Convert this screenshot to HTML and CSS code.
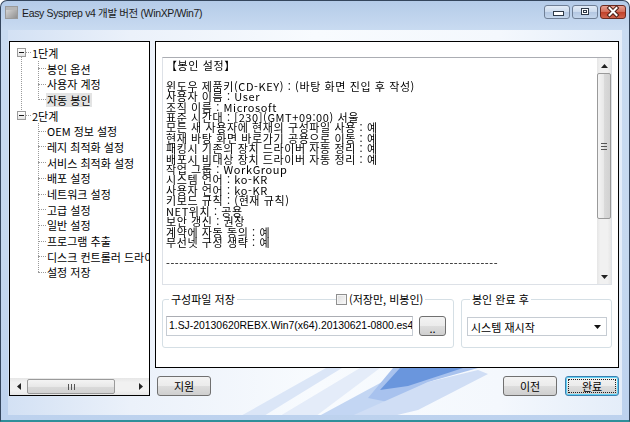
FILE: index.html
```html
<!DOCTYPE html>
<html lang="ko">
<head>
    <meta charset="UTF-8">
    <title>Easy Sysprep v4 개발 버전 (WinXP/Win7)</title>
    <link rel="stylesheet" href="styles.css">
</head>
<body>
    <div class="window">
        <div class="titlebar">
            <svg class="app-icon" viewBox="0 0 13 13">
                <defs>
                    <linearGradient id="ig" x1="0" y1="0" x2="1" y2="1">
                        <stop offset="0" stop-color="#e2e2e2"/>
                        <stop offset="1" stop-color="#8c8c8c"/>
                    </linearGradient>
                </defs>
                <rect x="0.5" y="0.5" width="12" height="12" fill="url(#ig)" stroke="#9a9a9a"/>
                <rect x="1" y="1" width="11" height="3" fill="#b5b5b5"/>
            </svg>
            <span class="title">Easy Sysprep v4 개발 버전 (WinXP/Win7)</span>
            <div class="caption-btns">
                <span class="cap"><i class="glyph-min"></i></span>
                <span class="cap"><i class="glyph-max"></i></span>
                <span class="cap cap-close">
                    <svg width="26" height="14" viewBox="0 0 26 14">
                        <path d="M9.5 3 L16.5 10 M16.5 3 L9.5 10" stroke="#4a1f16" stroke-width="4" stroke-linecap="square"/>
                        <path d="M9.5 3 L16.5 10 M16.5 3 L9.5 10" stroke="#fff" stroke-width="2" stroke-linecap="square"/>
                    </svg>
                </span>
            </div>
        </div>

        <div class="client">
            <svg class="streaks" width="614" height="385" viewBox="0 0 614 385">
                <polygon points="222,392 318,338 334,338 246,392" fill="#dbe6f7"/>
                <polygon points="262,392 352,338 372,338 300,392" fill="#e4ecf9"/>
                <polygon points="300,392 400,338 450,338 340,392" fill="#c3d6f3"/>
                <polygon points="360,368 385,338 470,338 420,352 380,372" fill="#a8c2ee"/>
                <polygon points="372,360 392,338 455,338 400,356" fill="#6a96dd"/>
                <polygon points="330,392 420,352 470,340 480,344 410,380 360,392" fill="#d0def5"/>
            </svg>

            <div class="tree">
                <div class="tree-body">
                    <ul>
                        <li class="root">
                            <div class="row"><span class="expander"></span><span class="tick root-tick"></span><span class="label">1단계</span></div>
                            <ul class="children">
                                <li><div class="row"><span class="tick"></span><span class="label">봉인 옵션</span></div></li>
                                <li><div class="row"><span class="tick"></span><span class="label">사용자 계정</span></div></li>
                                <li><div class="row"><span class="tick"></span><span class="label selected">자동 봉인</span></div></li>
                            </ul>
                        </li>
                        <li class="root last">
                            <div class="row"><span class="expander"></span><span class="tick root-tick"></span><span class="label">2단계</span></div>
                            <ul class="children">
                                <li><div class="row"><span class="tick"></span><span class="label">OEM 정보 설정</span></div></li>
                                <li><div class="row"><span class="tick"></span><span class="label">레지 최적화 설정</span></div></li>
                                <li><div class="row"><span class="tick"></span><span class="label">서비스 최적화 설정</span></div></li>
                                <li><div class="row"><span class="tick"></span><span class="label">배포 설정</span></div></li>
                                <li><div class="row"><span class="tick"></span><span class="label">네트워크 설정</span></div></li>
                                <li><div class="row"><span class="tick"></span><span class="label">고급 설정</span></div></li>
                                <li><div class="row"><span class="tick"></span><span class="label">일반 설정</span></div></li>
                                <li><div class="row"><span class="tick"></span><span class="label">프로그램 추출</span></div></li>
                                <li><div class="row"><span class="tick"></span><span class="label">디스크 컨트롤러 드라이버</span></div></li>
                                <li><div class="row"><span class="tick"></span><span class="label">설정 저장</span></div></li>
                            </ul>
                        </li>
                    </ul>
                </div>
                <div class="hscroll">
                    <span class="sb-arrow"><svg width="4" height="7" viewBox="0 0 4 7"><path d="M4 0 L0 3.5 L4 7 Z" fill="#222"/></svg></span>
                    <span class="hthumb"><i class="grip"></i></span>
                    <span class="track"></span>
                    <span class="sb-arrow"><svg width="4" height="7" viewBox="0 0 4 7"><path d="M0 0 L4 3.5 L0 7 Z" fill="#222"/></svg></span>
                </div>
            </div>

            <div class="main">
                <div class="panel">
                    <div class="memo">
<div class="memo-text">【봉인 설정】

윈도우 제품키(CD-KEY) : (바탕 화면 진입 후 작성)
사용자 이름 : User
조직 이름 : Microsoft
표준 시간대 : [230](GMT+09:00) 서울
모든 새 사용자에 현재의 구성파일 사용 : 예
현재 바탕 화면 바로가기 공용으로 이동 : 예
패킹시 기존의 장치 드라이버 자동 정리 : 예
배포시 비대상 장치 드라이버 자동 정리 : 예
작업 그룹 : WorkGroup
시스템 언어 : ko-KR
사용자 언어 : ko-KR
키보드 규칙 : (현재 규칙)
NET위치 : 공용
보안 갱신 : 권장
계약에 자동 동의 : 예
무선넷 구성 생략 : 예

---------------------------------------------------------------------------</div>
                        <div class="vscroll">
                            <span class="sb-arrow-v"><svg width="7" height="4" viewBox="0 0 7 4"><path d="M0 4 L3.5 0 L7 4 Z" fill="#222"/></svg></span>
                            <span class="vthumb"><i class="grip-v"></i></span>
                            <span class="track"></span>
                            <span class="sb-arrow-v"><svg width="7" height="4" viewBox="0 0 7 4"><path d="M0 0 L3.5 4 L7 0 Z" fill="#222"/></svg></span>
                        </div>
                    </div>

                    <div class="groups">
                        <fieldset class="group group-config">
                            <legend>구성파일 저장</legend>
                            <label class="save-only"><span class="check"></span>(저장만, 비봉인)</label>
                            <div class="field-row">
                                <div class="textbox">1.SJ-20130620REBX.Win7(x64).20130621-0800.es4</div>
                                <button class="btn btn-browse">..</button>
                            </div>
                        </fieldset>
                        <fieldset class="group group-after">
                            <legend>봉인 완료 후</legend>
                            <div class="combo">
                                <span>시스템 재시작</span>
                                <svg width="7" height="4" viewBox="0 0 7 4"><path d="M0 0 L3.5 4 L7 0 Z" fill="#111"/></svg>
                            </div>
                        </fieldset>
                    </div>
                </div>

                <div class="actions">
                    <button class="btn">지원</button>
                    <span class="spacer"></span>
                    <button class="btn">이전</button>
                    <button class="btn btn-default">완료</button>
                </div>
            </div>
        </div>
    </div>
</body>
</html>
```

FILE: styles.css
```css
body {
    margin: 0;
    background: #fff;
    font-family: "Noto Sans CJK KR", sans-serif;
    font-size: 11px;
    color: #000;
}

.window {
    position: relative;
    width: 630px;
    height: 422px;
    box-sizing: border-box;
    border: 1px solid #34455c;
    border-bottom: 2px solid #2f8f9a;
    border-radius: 7px 7px 0 0;
    overflow: hidden;
    background: linear-gradient(180deg, #b4cbe8 0%, #c9dbf1 7%, #c5d8ef 60%, #bdd2ee 100%);
}

/* title bar */
.titlebar {
    height: 29px;
    display: flex;
    align-items: flex-start;
    padding: 4px 3px 0 4px;
    box-sizing: border-box;
}

.app-icon {
    width: 13px;
    height: 13px;
    margin-top: 1px;
}

.title {
    margin-left: 4px;
    font-family: "Liberation Sans", "Noto Sans CJK KR", sans-serif;
    font-size: 10.5px;
    letter-spacing: -0.35px;
    line-height: 16px;
    color: #1b1b1b;
}

.caption-btns {
    margin-left: auto;
    display: flex;
    gap: 2px;
}

.cap {
    position: relative;
    width: 26px;
    height: 14px;
    box-sizing: border-box;
    border: 1px solid #6f7f96;
    border-radius: 3px;
    background: linear-gradient(#e3ecf7, #cbdaed 50%, #b3c7e2 51%, #c4d6ec);
}

.cap-close {
    border-color: #6b2a20;
    background: linear-gradient(#e8a193, #d26c58 50%, #c0412a 51%, #d0634c);
}

.cap-close svg {
    position: absolute;
    left: -1px;
    top: -1px;
}

.glyph-min {
    position: absolute;
    left: 8px;
    top: 5px;
    width: 9px;
    height: 3px;
    border: 1px solid #2f3a48;
    background: #fff;
}

.glyph-max {
    position: absolute;
    left: 8px;
    top: 2px;
    width: 6px;
    height: 5px;
    border: 1px solid #2f3a48;
    background: #fff;
    box-shadow: inset 0 0 0 1px #fff, inset 0 0 0 2px #2f3a48;
}

/* client area */
.client {
    position: relative;
    display: flex;
    gap: 5px;
    height: 385px;
    margin: 0 7px;
    padding: 11px 3px 19px 1px;
    box-sizing: border-box;
    background: linear-gradient(90deg, #d3e1f4 0%, #ebf1fa 20%, #f8fbfe 50%, #f4f8fd 80%, #e4edf9 100%);
}

.streaks {
    position: absolute;
    left: 0;
    top: 0;
    z-index: 0;
}

/* tree view */
.tree {
    position: relative;
    z-index: 1;
    width: 141px;
    box-sizing: border-box;
    border: 1px solid #000;
    background: #fff;
    display: flex;
    flex-direction: column;
}

.tree-body {
    flex: 1;
    overflow: hidden;
    padding-top: 3px;
}

.tree ul {
    list-style: none;
    margin: 0;
    padding: 0;
}

.tree li {
    position: relative;
}

.row {
    display: flex;
    align-items: center;
    height: 15.7px;
    white-space: nowrap;
}

.row > span {
    flex-shrink: 0;
}

.root > .row {
    padding-left: 7px;
}

.root:not(.last)::before {
    content: "";
    position: absolute;
    left: 11px;
    top: 8px;
    bottom: -8px;
    border-left: 1px dotted #9a9a9a;
}

.expander {
    position: relative;
    z-index: 1;
    width: 9px;
    height: 9px;
    box-sizing: border-box;
    border: 1px solid #9b9b9b;
    background: linear-gradient(#fff, #e4e4e4);
    display: flex;
    align-items: center;
    justify-content: center;
}

.expander::before {
    content: "";
    width: 5px;
    height: 1px;
    background: #1a1a1a;
}

.tick {
    width: 8px;
    border-top: 1px dotted #9a9a9a;
}

.root-tick {
    width: 5px;
}

.label {
    padding: 0 1px;
    line-height: 14px;
}

.selected {
    background: #e3e3e3;
}

.children {
    position: relative;
}

.children > li > .row {
    padding-left: 28px;
}

.children::before {
    content: "";
    position: absolute;
    left: 28px;
    top: 0;
    bottom: 8px;
    border-left: 1px dotted #9a9a9a;
}

/* scrollbars */
.hscroll {
    display: flex;
    align-items: center;
    height: 17px;
    background: linear-gradient(#e6e6e6, #f1f1f1 25%, #f1f1f1 75%, #e6e6e6);
}

.sb-arrow {
    width: 17px;
    height: 17px;
    display: flex;
    align-items: center;
    justify-content: center;
}

.hthumb {
    width: 88px;
    height: 15px;
    box-sizing: border-box;
    border: 1px solid #9a9a9a;
    border-radius: 2px;
    background: linear-gradient(#f4f4f4, #e8e8e8 50%, #dadada 51%, #d2d2d2);
    display: flex;
    align-items: center;
    justify-content: center;
}

.grip {
    width: 7px;
    height: 6px;
    background: repeating-linear-gradient(90deg, #555 0 1px, transparent 1px 3px);
}

.track {
    flex: 1;
}

.vscroll {
    width: 14px;
    display: flex;
    flex-direction: column;
    background: linear-gradient(90deg, #e6e6e6, #f1f1f1 25%, #f1f1f1 75%, #e6e6e6);
}

.sb-arrow-v {
    height: 15px;
    display: flex;
    align-items: center;
    justify-content: center;
}

.vthumb {
    height: 146px;
    box-sizing: border-box;
    border: 1px solid #9a9a9a;
    border-radius: 2px;
    background: linear-gradient(90deg, #f4f4f4, #e8e8e8 50%, #dadada 51%, #d2d2d2);
    display: flex;
    align-items: center;
    justify-content: center;
}

.grip-v {
    width: 6px;
    height: 7px;
    background: repeating-linear-gradient(180deg, #555 0 1px, transparent 1px 3px);
}

/* right side */
.main {
    position: relative;
    z-index: 1;
    flex: 1;
    display: flex;
    flex-direction: column;
}

.panel {
    height: 327px;
    box-sizing: border-box;
    border: 1px solid #000;
    background: #fff;
    padding: 15px 6px 0 6px;
}

.memo {
    display: flex;
    height: 228px;
    box-sizing: border-box;
    border: 1px solid #dde1e7;
    border-top-color: #abadb3;
    background: #fff;
}

.memo-text {
    flex: 1;
    overflow: hidden;
    padding: 2px 0 0 3px;
    white-space: pre;
    font-size: 11px;
    letter-spacing: 0.6px;
    line-height: 10.4px;
    will-change: transform;
    -webkit-font-smoothing: antialiased;
}

.groups {
    display: flex;
    gap: 7px;
    margin-top: 7px;
}

.group {
    position: relative;
    height: 56px;
    margin: 0;
    padding: 9px 3px 0 3px;
    box-sizing: border-box;
    border: 1px solid #d5dfe5;
    border-radius: 3px;
    min-width: 0;
}

.group legend {
    margin-left: 3px;
    padding: 0 2px;
    line-height: 15px;
}

.group-config {
    width: 292px;
}

.group-after {
    flex: 1;
    padding-left: 5px;
    padding-right: 4px;
}

.save-only {
    position: absolute;
    left: 173px;
    top: -15px;
    display: flex;
    align-items: center;
    gap: 2px;
    padding-right: 2px;
    background: #fff;
    line-height: 15px;
}

.check {
    width: 11px;
    height: 11px;
    box-sizing: border-box;
    border: 1px solid #8f8f8f;
    background: linear-gradient(135deg, #dcdcdc, #fafafa);
    box-shadow: inset 0 0 0 1px #f4f4f4;
}

.field-row {
    display: flex;
    gap: 6px;
}

.textbox {
    width: 247px;
    height: 20px;
    box-sizing: border-box;
    border: 1px solid #c6ccd3;
    border-top-color: #abadb3;
    padding: 0 2px;
    line-height: 18px;
    white-space: nowrap;
    overflow: hidden;
    font-family: "Liberation Sans", sans-serif;
    font-size: 10.4px;
    background: #fff;
}

.combo {
    display: flex;
    align-items: center;
    justify-content: space-between;
    height: 19px;
    margin-top: 1px;
    box-sizing: border-box;
    border: 1px solid #c6ccd3;
    padding: 0 5px 0 3px;
    background: #fff;
}

/* buttons */
.btn {
    height: 20px;
    padding: 0;
    box-sizing: border-box;
    border: 1px solid #707070;
    border-radius: 3px;
    background: linear-gradient(#f3f3f3, #ebebeb 50%, #dddddd 51%, #cfcfcf);
    font-family: "Noto Sans CJK KR", sans-serif;
    font-size: 11px;
    color: #000;
}

.btn-browse {
    width: 27px;
    line-height: 12px;
    padding-top: 4px;
}

.actions {
    display: flex;
    gap: 8px;
    margin-top: 8px;
    padding-left: 2px;
}

.actions .btn {
    width: 54px;
}

.spacer {
    flex: 1;
}

.btn-default {
    position: relative;
    border-color: #3c7fb1;
    box-shadow: inset 0 0 0 1px #5fd2f5;
}

.btn-default::after {
    content: "";
    position: absolute;
    inset: 2px;
    border: 1px dotted #222;
}
```
